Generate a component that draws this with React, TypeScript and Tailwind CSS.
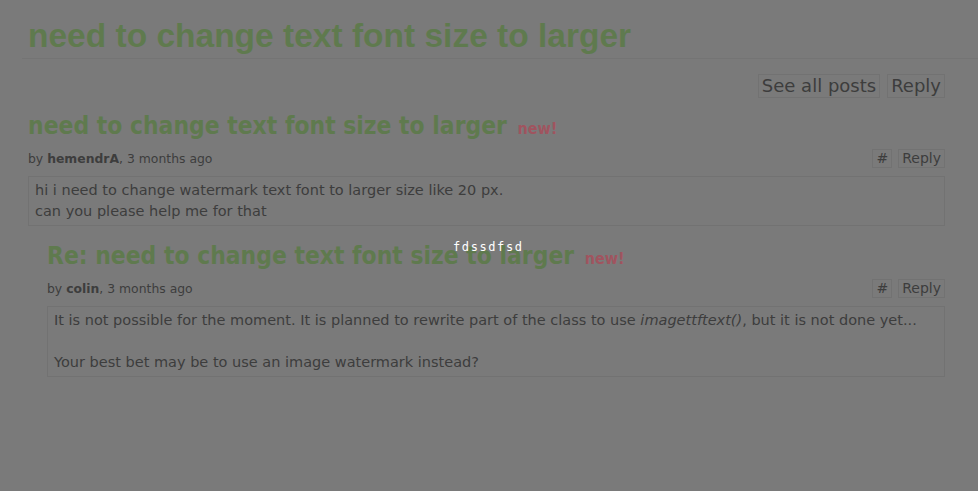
import React from "react";

const lucida = { fontFamily: '"DejaVu Sans", "Liberation Sans", sans-serif' };
const condensed = { fontFamily: '"DejaVu Sans Condensed", "DejaVu Sans", sans-serif' };

function ActionLinks({ big }: { big?: boolean }) {
  if (big) {
    return (
      <div className="flex justify-end gap-[7px] pr-[33px] text-[18px] leading-[22px] text-[#3d3d3d]">
        <span className="border border-[#727272] px-[3px]">See all posts</span>
        <span className="border border-[#727272] px-[3px]">Reply</span>
      </div>
    );
  }
  return (
    <div className="flex gap-[6px] text-[14px] leading-[17px] text-[#3d3d3d]">
      <span className="border border-[#727272] px-[3px]">#</span>
      <span className="border border-[#727272] px-[3px]">Reply</span>
    </div>
  );
}

type PostProps = {
  title: string;
  author: string;
  children: React.ReactNode;
};

function Post({ title, author, children }: PostProps) {
  return (
    <div className="flex flex-col">
      <h2 className="text-[24.4px] font-bold leading-[30px] text-[#5f7a4e] [font-stretch:condensed]" style={condensed}>
        {title} <span className="ml-[3px] text-[16px] text-[#a0545f]">new!</span>
      </h2>
      <div className="mt-[5px] flex items-center justify-between">
        <p className="text-[12.4px] leading-[16px] text-[#3d3d3d]">
          by <b>{author}</b>, 3 months ago
        </p>
        <ActionLinks />
      </div>
      <div className="mt-[8px] border border-[#727272] px-[6px] py-[3px] text-[14.5px] leading-[21px] text-[#3d3d3d]">
        {children}
      </div>
    </div>
  );
}

export default function App() {
  return (
    <div className="relative h-[491px] w-[978px] overflow-hidden bg-[#7a7a7a]" style={lucida}>
      <div className="pl-[28px] pt-[16px]">
        <h1
          className="text-[33.5px] font-bold leading-[40px] text-[#5f7a4e]"
          style={{ fontFamily: '"Liberation Sans", Arial, sans-serif' }}
        >
          need to change text font size to larger
        </h1>
      </div>
      <div className="ml-[22px] mt-[2px] border-t border-[#747474]" />
      <div className="mt-[15px]">
        <ActionLinks big />
      </div>
      <div className="ml-[28px] mr-[33px] mt-[13px] flex flex-col gap-[15px]">
        <Post title="need to change text font size to larger" author="hemendrA">
          <p>hi i need to change watermark text font to larger size like 20 px.</p>
          <p>can you please help me for that</p>
        </Post>
        <div className="pl-[19px]">
          <Post title="Re: need to change text font size to larger" author="colin">
            <p>
              It is not possible for the moment. It is planned to rewrite part of the class to use{" "}
              <i>imagettftext()</i>, but it is not done yet...
            </p>
            <p>&nbsp;</p>
            <p>Your best bet may be to use an image watermark instead?</p>
          </Post>
        </div>
      </div>
      <span
        className="absolute left-[453px] top-[240px] text-[12px] leading-[14px] tracking-[1.6px] text-white"
        style={{ fontFamily: '"DejaVu Sans Mono", monospace' }}
      >
        fdssdfsd
      </span>
    </div>
  );
}
